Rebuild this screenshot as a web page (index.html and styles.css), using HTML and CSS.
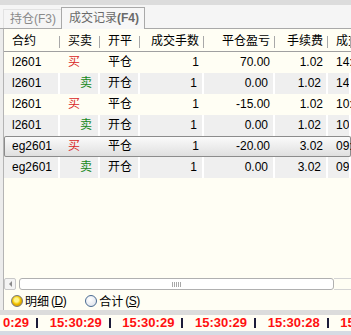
FILE: index.html
```html
<!DOCTYPE html>
<html lang="zh-CN">
<head>
  <meta charset="UTF-8" />
  <title>成交记录</title>
  <link rel="stylesheet" href="styles.css">
</head>
<body>

  <div class="topbar"></div>

  <div class="tabs">
    <div class="tab">持仓(F3)</div>
    <div class="tab active">成交记录<b>(F4)</b></div>
  </div>

  <div class="panel">
    <div class="grid head">
      <div class="cell">合约</div>
      <div class="cell">买卖</div>
      <div class="cell">开平</div>
      <div class="cell num">成交手数</div>
      <div class="cell num">平仓盈亏</div>
      <div class="cell num">手续费</div>
      <div class="cell">成交时间</div>
    </div>

    <div class="rows">
      <div class="grid row">
        <div class="cell">l2601</div>
        <div class="cell buy">买</div>
        <div class="cell">平仓</div>
        <div class="cell num">1</div>
        <div class="cell num">70.00</div>
        <div class="cell num">1.02</div>
        <div class="cell">14:55:01</div>
      </div>
      <div class="grid row alt">
        <div class="cell">l2601</div>
        <div class="cell sell">卖</div>
        <div class="cell">开仓</div>
        <div class="cell num">1</div>
        <div class="cell num">0.00</div>
        <div class="cell num">1.02</div>
        <div class="cell">14:20:11</div>
      </div>
      <div class="grid row">
        <div class="cell">l2601</div>
        <div class="cell buy">买</div>
        <div class="cell">平仓</div>
        <div class="cell num">1</div>
        <div class="cell num">-15.00</div>
        <div class="cell num">1.02</div>
        <div class="cell">10:41:32</div>
      </div>
      <div class="grid row alt">
        <div class="cell">l2601</div>
        <div class="cell sell">卖</div>
        <div class="cell">开仓</div>
        <div class="cell num">1</div>
        <div class="cell num">0.00</div>
        <div class="cell num">1.02</div>
        <div class="cell">10:02:45</div>
      </div>
      <div class="grid row selected">
        <div class="cell">eg2601</div>
        <div class="cell buy">买</div>
        <div class="cell">平仓</div>
        <div class="cell num">1</div>
        <div class="cell num">-20.00</div>
        <div class="cell num">3.02</div>
        <div class="cell">09:48:20</div>
      </div>
      <div class="grid row alt">
        <div class="cell">eg2601</div>
        <div class="cell sell">卖</div>
        <div class="cell">开仓</div>
        <div class="cell num">1</div>
        <div class="cell num">0.00</div>
        <div class="cell num">3.02</div>
        <div class="cell">09:12:07</div>
      </div>
    </div>

    <div class="hscroll">
      <div class="arrow"><span></span></div>
      <div class="thumb"><span class="grip"></span></div>
      <div class="track"></div>
    </div>

    <div class="options">
      <label class="radio"><span class="dot on"></span>明细<span class="key">(<u>D</u>)</span></label>
      <label class="radio"><span class="dot"></span>合计<span class="key">(<u>S</u>)</span></label>
    </div>
  </div>

  <div class="band"></div>

  <div class="ticker">
    <span class="time">0:29</span><span class="sep"></span>
    <span class="time">15:30:29</span><span class="sep"></span>
    <span class="time">15:30:29</span><span class="sep"></span>
    <span class="time">15:30:29</span><span class="sep"></span>
    <span class="time">15:30:28</span><span class="sep"></span>
    <span class="time">15:30:28</span>
  </div>

  <div class="footer"></div>

</body>
</html>
```

FILE: styles.css
```css
body {
  margin: 0;
  padding: 0;
  width: 351px;
  height: 335px;
  overflow: hidden;
  font-family: "Liberation Sans", "Noto Sans CJK SC", sans-serif;
  font-size: 12px;
  color: #000;
  background-color: #ececec;
  display: flex;
  flex-direction: column;
}

.topbar {
  height: 5px;
  background-color: #dcdcdc;
}

.tabs {
  height: 23px;
  display: flex;
  align-items: flex-end;
  padding-left: 3px;
  background-color: #f5f5f5;
  border-bottom: 1px solid #a9a9a9;
}

.tab {
  height: 18px;
  line-height: 18px;
  padding: 0 5px 0 6px;
  color: #8a8a8a;
  border-left: 1px solid #e2e2e2;
  border-top: 1px solid #e2e2e2;
}

.tab.active {
  height: 21px;
  line-height: 21px;
  margin-bottom: -1px;
  padding: 0 5px 0 7px;
  color: #6a6a6a;
  background-color: #f7f7f7;
  border: 1px solid #a9a9a9;
  border-bottom: none;
}

.tab b {
  font-weight: bold;
}

.panel {
  flex: 1;
  margin-left: 3px;
  border-left: 1px solid #b4b4b4;
  background-color: #fffef4;
  display: flex;
  flex-direction: column;
}

.grid {
  display: grid;
  grid-template-columns: 56px 40px 40px 64px 71px 53px 1fr;
  white-space: nowrap;
  overflow: hidden;
}

.cell {
  padding: 0 4px 0 8px;
  overflow: hidden;
}

.cell.num {
  text-align: right;
  padding: 0 5px 0 0;
}

.head {
  height: 22px;
  line-height: 24px;
  border-bottom: 1px solid #a0a0a0;
}

.head .cell {
  position: relative;
}

.head .cell::after {
  content: "";
  position: absolute;
  right: 0;
  top: 7px;
  height: 12px;
  border-right: 1px solid #a8a8a8;
}

.rows {
  flex: 1;
}

.row {
  height: 21px;
  line-height: 21px;
}

.row.alt {
  background-color: #efefef;
}

.row.alt .cell {
  border-right: 2px solid #ffffff;
}

.row.selected {
  border-radius: 2px;
  box-shadow: inset 0 0 0 1px #8c8c8c;
  background: linear-gradient(#fcfcfc, #dedede);
}

.buy {
  color: #d82626;
}

.sell {
  color: #17881a;
  padding-left: 20px;
}

.hscroll {
  height: 12px;
  display: flex;
  margin-bottom: 1px;
}

.arrow {
  width: 10px;
  border: 1px solid #c8c8c8;
  border-radius: 2px;
  background-color: #f4f4f4;
  display: flex;
  align-items: center;
  justify-content: center;
}

.arrow span {
  width: 0;
  height: 0;
  border-top: 3px solid transparent;
  border-bottom: 3px solid transparent;
  border-right: 3px solid #8a8a8a;
}

.thumb {
  width: 313px;
  margin-left: 3px;
  border: 1px solid #b0b0b0;
  border-radius: 3px;
  background-color: #ffffff;
  display: flex;
  align-items: center;
  justify-content: center;
}

.grip {
  width: 9px;
  height: 5px;
  background: repeating-linear-gradient(90deg, #a8a8a8 0 1px, transparent 1px 2px);
}

.track {
  flex: 1;
  border-top: 1px solid #d4d4d4;
  border-bottom: 1px solid #d4d4d4;
}

.options {
  height: 19px;
  display: flex;
  align-items: center;
  padding-left: 7px;
  gap: 19px;
}

.radio {
  display: flex;
  align-items: center;
}

.dot {
  width: 10px;
  height: 10px;
  margin-right: 2px;
  border: 1px solid #4a6b92;
  border-radius: 50%;
  background: radial-gradient(circle at 40% 35%, #ffffff, #d8dee8);
}

.dot.on {
  border-color: #7a7a7a;
  background: radial-gradient(circle at 45% 40%, #fff58a 0 2px, #f2c400 4px, #e0a800 5px);
}

.key {
  font-size: 12px;
  margin-left: 2px;
  letter-spacing: -0.5px;
}

.band {
  height: 5px;
  background-color: #dcdcdc;
}

.ticker {
  height: 16px;
  line-height: 16px;
  padding-left: 3px;
  background-color: #fffef4;
  white-space: nowrap;
  overflow: hidden;
  font-size: 13px;
  font-weight: bold;
  color: #ff1010;
}

.time {
  display: inline-block;
}

.sep {
  display: inline-block;
  width: 2px;
  height: 10px;
  margin: 0 8px 0 7px;
  vertical-align: -1px;
  background-color: #1c1c3a;
}

.footer {
  height: 4px;
  background-color: #d6dbe3;
}
```
